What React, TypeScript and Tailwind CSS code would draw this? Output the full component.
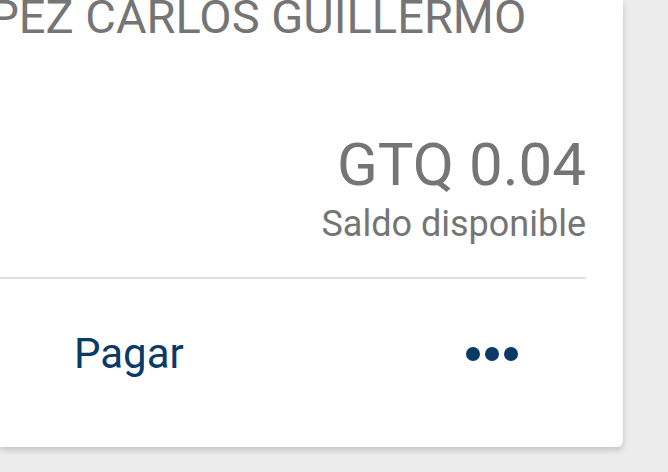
export default function App() {
  return (
    <div className="w-[668px] h-[472px] bg-[#ececec] overflow-hidden" style={{ fontFamily: "Roboto, 'Noto Sans', sans-serif" }}>
      <div className="w-[623px] h-[447px] bg-white rounded-br-[6px] shadow-[0_3px_6px_rgba(0,0,0,0.18)] overflow-hidden flex flex-col">
        {/* nombre del titular */}
        <div className="-mt-[7px] -ml-[67px] whitespace-nowrap text-[47px] leading-none text-[#757575]">
          LOPEZ CARLOS GUILLERMO
        </div>

        <div className="mt-[95px] pr-[37px] flex flex-col items-end text-[#757575]">
          <span className="text-[60px] leading-none">GTQ 0.04</span>
          <span className="mt-[11px] text-[36px] leading-none">Saldo disponible</span>
        </div>

        <div className="mt-[35px] mr-[37px] h-[2px] bg-[#e0e0e0]" />

        <div className="flex-1 flex items-center justify-between pl-[74px] pr-[105px] pb-[18px]">
          <button className="text-[42px] leading-none text-[#0a3a66]">Pagar</button>
          <button className="flex items-center gap-[5px]">
            <span className="w-[14px] h-[14px] rounded-full bg-[#0a3a66]" />
            <span className="w-[14px] h-[14px] rounded-full bg-[#0a3a66]" />
            <span className="w-[14px] h-[14px] rounded-full bg-[#0a3a66]" />
          </button>
        </div>
      </div>
    </div>
  )
}
